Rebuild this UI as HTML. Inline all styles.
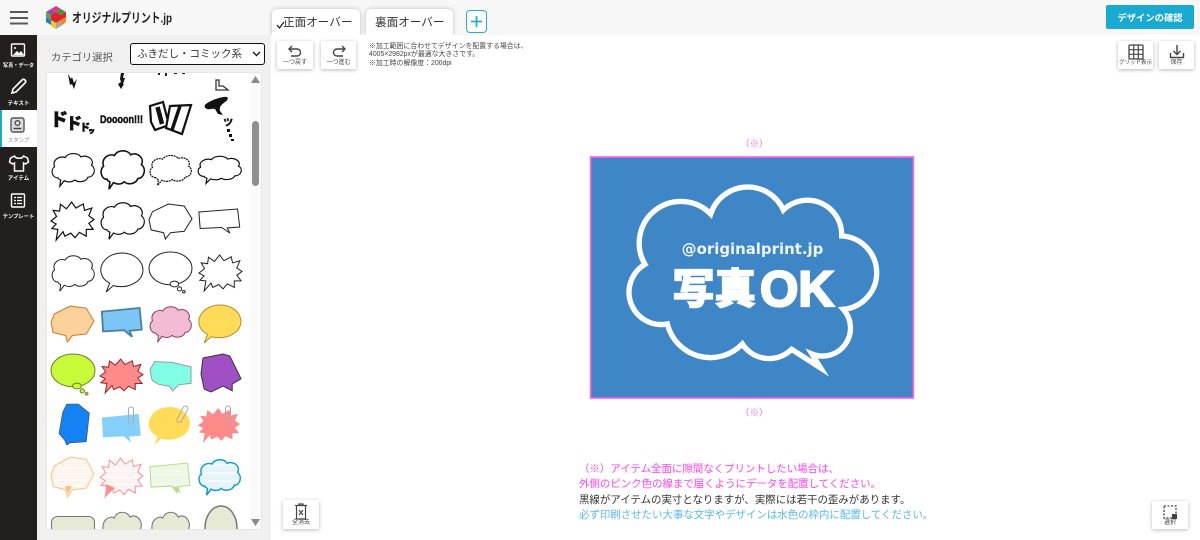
<!DOCTYPE html>
<html lang="ja"><head><meta charset="utf-8"><title>デザイン</title>
<style>
*{box-sizing:border-box}
html,body{margin:0;padding:0;width:1200px;height:540px;overflow:hidden;background:#fff;font-family:"Liberation Sans","Noto Sans CJK JP",sans-serif}
.a{position:absolute;white-space:nowrap}
.btn{position:absolute;background:#fff;box-shadow:0 1px 4px rgba(0,0,0,.28);text-align:center;color:#444;font-size:6px}
.btn span{position:absolute;left:0;right:0;bottom:2px;line-height:7px}
.btn svg{position:absolute;left:50%;top:3px;transform:translateX(-50%)}
.lab{position:absolute;left:0;width:37px;text-align:center;color:#fff;font-size:5.5px;line-height:8px;font-weight:bold;white-space:nowrap}
.tab{position:absolute;top:9px;height:26px;background:#fff;border-radius:5px 5px 0 0;box-shadow:0 0 4px rgba(0,0,0,.25);font-size:11.600px;line-height:28px;color:#333;white-space:nowrap}
</style></head><body>
<div class="a" style="left:0;top:0;width:1200px;height:35px;background:#f7f7f7"></div>
<div class="a" style="left:37px;top:35px;width:234px;height:505px;background:#f0f0f0"></div>
<div class="a" style="left:0;top:35px;width:37px;height:505px;background:#231f1e"></div>

<!-- hamburger -->
<svg class="a" style="left:10px;top:11px" width="18" height="14"><g fill="#58595b"><rect width="18" height="2"/><rect y="6" width="18" height="2"/><rect y="11.500" width="18" height="2"/></g></svg>
<!-- logo -->
<svg class="a" style="left:45px;top:6px" width="22" height="24" viewBox="0 0 22 24">
<polygon points="11,0 16,3 11,6 6,3" fill="#e8347c"/><polygon points="6,3 11,6 6,9 1,6" fill="#8c4fb0"/><polygon points="16,3 21,6 16,9 11,6" fill="#2f9e44"/>
<polygon points="1,6 6,9 6,14 1,11" fill="#5cab3c"/><polygon points="6,9 11,6 16,9 16,14 11,17 6,14" fill="#e5202a"/><polygon points="16,9 21,6 21,11 16,14" fill="#e5202a"/>
<polygon points="1,11 6,14 6,19 1,16" fill="#1583d8"/><polygon points="6,14 11,17 11,23 6,20" fill="#f8c51c"/><polygon points="11,17 16,14 16,20 11,23" fill="#a8a8a8"/><polygon points="16,14 21,11 21,16 16,20" fill="#f08a1d"/>
</svg>
<svg class="a" style="left:72px;top:8px" width="102" height="20"><text x="0" y="14.500" font-size="13" font-weight="bold" fill="#222" textLength="100" lengthAdjust="spacingAndGlyphs" font-family="Liberation Sans,Noto Sans CJK JP,sans-serif">オリジナルプリント.jp</text></svg>

<!-- sidebar -->
<svg class="a" style="left:0;top:35px" width="37" height="190" viewBox="0 0 37 190" fill="none">
<rect x="0" y="75" width="37" height="37" fill="#fff"/><rect x="0" y="75" width="2" height="37" fill="#1aa9d0"/>
<rect x="11.500" y="9" width="13" height="12" rx="1" stroke="#fff" stroke-width="1.400"/><circle cx="15" cy="13" r="1" fill="#fff"/><path d="M13 20l4-4 2 2 2-2 3 4z" fill="#fff"/>
<path d="M12 58l1-4 9-9c1-1 2-1 3 0s1 2 0 3l-9 9z" stroke="#fff" stroke-width="1.600"/>
<rect x="11" y="83" width="13" height="14" rx="2" stroke="#555" stroke-width="1.400" fill="#ddd"/><circle cx="17.500" cy="88" r="2.400" stroke="#444" stroke-width="1.300"/><path d="M13.500 93.500h8" stroke="#444" stroke-width="1.500"/>
<path d="M14 121l-4 2-1 4 3 2 2-1v8h9v-8l2 1 3-2-1-4-4-2c-1 3-8 3-9 0z" stroke="#fff" stroke-width="1.500" transform="translate(0.500,0)"/>
<rect x="11.500" y="159" width="13" height="13" rx="1" stroke="#fff" stroke-width="1.400"/><path d="M14 162.500h2M14 165.500h2M14 168.500h2M17 162.500h5M17 165.500h5M17 168.500h5" stroke="#fff" stroke-width="1.300"/>
</svg>
<div class="lab" style="top:62px;font-size:5.200px">写真・データ</div>
<div class="lab" style="top:100px">テキスト</div>
<div class="lab" style="top:137px;color:#888;font-weight:normal">スタンプ</div>
<div class="lab" style="top:175px">アイテム</div>
<div class="lab" style="top:213px;font-size:5.300px">テンプレート</div>

<!-- category -->
<div class="a" style="left:51px;top:51px;font-size:10.300px;line-height:16px;color:#555">カテゴリ選択</div>
<div class="a" style="left:130px;top:43px;width:135px;height:22px;background:#fff;border:1px solid #111;border-radius:3px;font-size:10.500px;line-height:20px;padding-left:6px;color:#333">ふきだし・コミック系
<svg style="position:absolute;right:3px;top:7px" width="9" height="6"><path d="M1 1l3.500 3.500L8 1" fill="none" stroke="#222" stroke-width="1.500"/></svg></div>

<!-- stamp list -->
<svg class="a" style="left:46px;top:72px" width="216" height="458" viewBox="46 72 216 458">
<defs>
<path id="cloud" vector-effect="non-scaling-stroke" d="M16 74C2 74-2 50 8 42C2 22 20 10 32 16C40 0 62 2 68 14C82 6 100 22 92 38C104 48 98 72 84 72C80 86 62 88 54 80C46 88 36 86 30 82L20 98L22 80C18 78 16 76 16 74Z"/>
<path id="oval" vector-effect="non-scaling-stroke" d="M30 84L14 100L22 78C0 66-4 40 10 22C28-4 72-4 90 22C104 42 98 66 78 78C62 88 44 88 30 84Z"/>
<g id="think"><ellipse vector-effect="non-scaling-stroke" cx="50" cy="40" rx="50" ry="40"/><ellipse vector-effect="non-scaling-stroke" cx="59" cy="78" rx="10" ry="7"/><circle vector-effect="non-scaling-stroke" cx="71" cy="90" r="5"/><circle vector-effect="non-scaling-stroke" cx="81" cy="97" r="3"/></g>
<polygon id="burst" vector-effect="non-scaling-stroke" points="0,50 13,38 5,22 20,24 22,6 36,18 48,0 58,16 75,5 78,22 95,16 88,36 100,46 88,56 98,72 82,72 82,90 66,80 56,94 46,82 32,90 28,78 12,100 16,72 2,70 12,58"/>
<polygon id="poly" vector-effect="non-scaling-stroke" points="0,45 8,22 45,0 82,6 100,42 82,78 50,82 38,100 34,82 5,74"/>
<polygon id="rect" vector-effect="non-scaling-stroke" points="2,12 92,0 97,72 68,76 74,96 55,74 5,78"/>
<pattern id="lo" width="6" height="3" patternUnits="userSpaceOnUse"><rect width="6" height="3" fill="#fff"/><rect width="6" height="1" fill="#ffe3cc"/></pattern>
<pattern id="lp" width="6" height="3" patternUnits="userSpaceOnUse"><rect width="6" height="3" fill="#fff"/><rect width="6" height="1" fill="#ffdfe1"/></pattern>
<pattern id="lg" width="6" height="3" patternUnits="userSpaceOnUse"><rect width="6" height="3" fill="#fff"/><rect width="6" height="1" fill="#cfe8b4"/></pattern>
<pattern id="lb" width="6" height="3" patternUnits="userSpaceOnUse"><rect width="6" height="3" fill="#fff"/><rect width="6" height="1" fill="#bfe2f2"/></pattern>
<clipPath id="cl"><rect x="47" y="73" width="203" height="456"/></clipPath>
</defs>
<rect x="46.500" y="72.500" width="215" height="457" fill="#fff" stroke="#e6e6e6"/>
<rect x="250" y="73" width="11" height="456" fill="#fafafa"/>
<rect x="252" y="121" width="7" height="65" rx="3.500" fill="#8f8f8f"/>
<polygon points="255.500,76 251,83 260,83" fill="#8a8a8a"/><polygon points="255.500,526 251,519 260,519" fill="#8a8a8a"/>
<g clip-path="url(#cl)">
<!-- row 1 -->
<path d="M68 74l3 5 1-2 2 6 3-4-3 10-2-5-2 1zM121 73l3 0-1 5 2 0-2 6 1 0-3 5-3-5 3-2-1-3z" fill="#111"/>
<path d="M158 73h2v2h-2zM165 73h2v3h-2zM174 73h3v1h-3zM182 73h3v1h-3z" fill="#222"/>
<path d="M216 80h3v6h4l5 4h-12z" fill="none" stroke="#333" stroke-width="1.300"/>
<!-- row 2 -->
<g font-weight="900" fill="#111" stroke="#111" stroke-width=".6" font-family="Noto Sans CJK JP,sans-serif">
<text x="50" y="126" font-size="18">ド</text><text x="66" y="129" font-size="16">ド</text><text x="80" y="131" font-size="10">ド</text><text x="88" y="133" font-size="7">ッ</text>
</g>
<text x="100" y="123" font-size="11" font-weight="bold" fill="#111" stroke="#111" stroke-width=".5" textLength="43" lengthAdjust="spacingAndGlyphs" font-family="Liberation Sans,sans-serif">Doooon!!!</text>
<polygon points="150,106 163,102 169,125 155,130 151,122" fill="#fff" stroke="#111" stroke-width="2.200"/>
<path d="M157.500 107l4.500 17" stroke="#111" stroke-width="4.500"/>
<polygon points="170,106 191,105 182,134 166,128" fill="#fff" stroke="#111" stroke-width="2.200"/>
<path d="M180 106l-8 24" stroke="#111" stroke-width="3.500"/>
<path d="M205 105c2-3 16-9 22-8 2 1 0 4-2 5-4 3-6 5-5 9l3 4-5-1-3-5c-3-1-6 1-8 0-2-1-3-2-2-4z" fill="#111"/>
<text x="222" y="125" font-size="12" font-weight="900" fill="#111" font-family="Noto Sans CJK JP,sans-serif">ッ</text>
<path d="M227 129h3v3h-3zM229 134h3v3h-3zM231 139h3v2h-3z" fill="#111"/>
<!-- row 3 -->
<g fill="#fff" stroke="#111" stroke-width="1.200">
<use href="#cloud" transform="translate(51,152) scale(.44,.35)"/>
<use href="#cloud" transform="translate(100,149) scale(.45,.41)" stroke-width="1.600"/>
<use href="#cloud" transform="translate(149,154) scale(.43,.32)" stroke-dasharray="2 .7"/>
<use href="#cloud" transform="translate(197,155) scale(.45,.29)"/>
<!-- row 4 -->
<use href="#burst" transform="translate(51,202) scale(.43,.38)"/>
<use href="#cloud" transform="translate(100,201) scale(.45,.39)"/>
</g>
<g fill="#fff" stroke="#222" stroke-width="1">
<use href="#poly" transform="translate(149,204) scale(.43,.35)"/>
<use href="#rect" transform="translate(198,209) scale(.43,.25)"/>
<!-- row 5 -->
<use href="#cloud" transform="translate(51,254) scale(.44,.38)"/>
<use href="#oval" transform="translate(100,252) scale(.44,.40)"/>
<use href="#think" transform="translate(149,252) scale(.43,.41)"/>
<use href="#burst" transform="translate(199,255) scale(.43,.36)"/>
</g>
<!-- row 6 -->
<use href="#poly" transform="translate(51,306) scale(.43,.36)" fill="#fdd19c" stroke="#c77a24"/>
<use href="#rect" transform="translate(101,308) scale(.42,.30)" fill="#7cc6f5" stroke="#4c7f9c" stroke-width="1.800"/>
<use href="#cloud" transform="translate(149,305) scale(.43,.38)" fill="#f2bcd4" stroke="#8d3d5f"/>
<use href="#oval" transform="translate(198,304) scale(.44,.39)" fill="#ffdb57" stroke="#b08f2c"/>
<!-- row 7 -->
<use href="#think" transform="translate(51,354) scale(.44,.41)" fill="#c8fb3a" stroke="#66802a"/>
<use href="#burst" transform="translate(100,359) scale(.43,.34)" fill="#ff8a8a" stroke="#9a2424"/>
<polygon points="0,30 12,5 55,8 100,22 100,75 70,80 55,100 48,85 20,78 5,65" transform="translate(150,360) scale(.41,.31)" fill="#80ffe6" stroke="#999" vector-effect="non-scaling-stroke"/>
<polygon points="5,10 55,0 72,5 100,62 78,75 78,92 55,80 25,95 8,88 0,50" transform="translate(201,354) scale(.40,.40)" fill="#a14fc4" stroke="#333" vector-effect="non-scaling-stroke"/>
<!-- row 8 -->
<polygon points="25,0 62,0 98,22 88,92 35,95 25,100 18,88 0,72 12,20" transform="translate(59,404) scale(.31,.41)" fill="#1482f2" stroke="#444" stroke-width=".6" vector-effect="non-scaling-stroke"/>
<use href="#rect" transform="translate(101,414) scale(.41,.30)" fill="#85d0fb"/>
<use href="#oval" transform="translate(148,406) scale(.43,.39)" fill="#ffdb57"/>
<use href="#burst" transform="translate(198,408) scale(.42,.35)" fill="#ff8a8a"/>
<g fill="none" stroke="#aaa" stroke-width="1"><rect x="128.500" y="407" width="5" height="17" rx="2.500"/><rect x="180" y="405" width="5" height="18" rx="2.500" transform="rotate(28 182 414)"/><rect x="225.500" y="406" width="5" height="16" rx="2.500"/></g>
<!-- row 9 -->
<use href="#poly" transform="translate(51,457) scale(.43,.40)" fill="url(#lo)" stroke="#ffbd80"/>
<use href="#burst" transform="translate(100,458) scale(.43,.39)" fill="url(#lp)" stroke="#ff9098"/>
<use href="#rect" transform="translate(149,463) scale(.42,.31)" fill="url(#lg)" stroke="#b4dc8a"/>
<use href="#cloud" transform="translate(198,458) scale(.43,.38)" fill="url(#lb)" stroke="#149ccb" stroke-width="1.500"/>
<polygon points="65,486 72,486 68,494" fill="#ffbd80"/><polygon points="106,484 115,488 106,496" fill="#ff8f8f"/><polygon points="172,487 179,487 177,494" fill="#b4dc8a"/>
<!-- row 10 -->
<g fill="#e6e9d4" stroke="#777" stroke-width="1.100">
<rect x="51.500" y="516.500" width="43" height="30" rx="6"/>
<use href="#cloud" transform="translate(100,510) scale(.44,.50)"/>
<use href="#cloud" transform="translate(149,510) scale(.43,.50)"/>
<ellipse cx="221" cy="528" rx="16" ry="22" stroke-width="1.500"/>
</g>
</g>
</svg>

<!-- tabs -->
<div class="a" style="left:271px;top:35px;width:929px;height:505px;background:#fff"></div>
<div class="tab" style="left:272px;width:88px;padding-left:11px">正面オーバー
<svg style="position:absolute;left:4px;top:12px" width="9" height="8"><path d="M1 4l2.500 3L8 1" fill="none" stroke="#222" stroke-width="1.300"/></svg></div>
<div class="tab" style="left:366px;width:87px;padding-left:9px">裏面オーバー</div>
<div class="a" style="left:271px;top:35px;width:200px;height:6px;background:#fff"></div>
<div class="a" style="left:466px;top:10px;width:21px;height:23px;background:#fff;border:1px solid #26aed4;border-radius:4px">
<svg style="position:absolute;left:3px;top:4px" width="13" height="13"><path d="M6.500 1v11M1 6.500h11" stroke="#26aed4" stroke-width="1.800"/></svg></div>

<!-- confirm -->
<div class="a" style="left:1106px;top:5px;width:88px;height:24px;background:#1aa9d0;border-radius:2px;color:#fff;font-size:9.300px;font-weight:bold;line-height:26px;text-align:center">デザインの確認</div>

<!-- top buttons -->
<div class="btn" style="left:277px;top:41px;width:36px;height:28px"><svg width="16" height="16" viewBox="0 0 16 16" fill="none"><path d="M5 2L2 5l3 3M2 5h8a3.500 3.500 0 010 7H4" stroke="#444" stroke-width="1.400"/></svg><span>一つ戻す</span></div>
<div class="btn" style="left:321px;top:41px;width:35px;height:28px"><svg width="16" height="16" viewBox="0 0 16 16" fill="none"><path d="M11 2l3 3-3 3M14 5H6a3.500 3.500 0 000 7h6" stroke="#444" stroke-width="1.400"/></svg><span>一つ進む</span></div>
<div class="a" style="left:369px;top:43px;font-size:6.900px;line-height:8.300px;color:#444">※加工範囲に合わせてデザインを配置する場合は、<br>4005×2982pxが最適な大きさです。<br>※加工時の解像度：200dpi</div>
<div class="btn" style="left:1118px;top:41px;width:35px;height:28px"><svg width="16" height="16" viewBox="0 0 16 16" fill="none"><rect x="1" y="1" width="14" height="14" rx="1" stroke="#444" stroke-width="1.300"/><path d="M5.700 1v14M10.300 1v14M1 5.700h14M1 10.300h14" stroke="#444" stroke-width="1.200"/></svg><span style="font-size:5.500px">グリッド表示</span></div>
<div class="btn" style="left:1159px;top:41px;width:35px;height:28px"><svg width="17" height="16" viewBox="0 0 17 16" fill="none"><path d="M8.500 1v9M5 7l3.500 3.500L12 7M2 9v4.500h13V9" stroke="#444" stroke-width="1.400"/></svg><span>保存</span></div>

<!-- canvas -->
<div class="a" style="left:740px;top:139px;font-size:9.500px;line-height:12px;color:#ff66ee">（※）</div>
<div class="a" style="left:740px;top:408px;font-size:9.500px;line-height:12px;color:#ff66ee">（※）</div>
<svg class="a" style="left:580px;top:130px" width="340" height="290" viewBox="0 0 1020 870">
<rect x="32" y="81" width="968" height="723" fill="#3f86c7" stroke="#ff5cf4" stroke-width="5"/>
<path d="M392 252A117 117 0 0 1 610 240A103 103 0 0 1 785 318A110.300 110.300 0 0 1 790 538A84 84 0 0 1 696 672L722 714L635 658A96 96 0 0 1 487 642A133 133 0 0 1 262 582A97 97 0 0 1 195 403A125 125 0 0 1 392 252Z" fill="none" stroke="#fff" stroke-width="16" stroke-linejoin="miter" stroke-miterlimit="8"/>
<text x="305" y="372" font-size="44" font-weight="bold" fill="#eef5fb" textLength="425" lengthAdjust="spacingAndGlyphs" font-family="DejaVu Sans,sans-serif">@originalprint.jp</text>
<text x="278" y="520" font-size="124" font-weight="900" fill="#fff" stroke="#fff" stroke-width="4" textLength="250" lengthAdjust="spacingAndGlyphs" font-family="Noto Sans CJK JP,sans-serif">写真</text>
<text x="540" y="528" font-size="150" font-weight="bold" fill="#fff" stroke="#fff" stroke-width="7" textLength="222" lengthAdjust="spacingAndGlyphs" font-family="Liberation Sans,sans-serif">OK</text>
</svg>

<!-- notes -->
<div class="a" style="left:579px;top:462px;font-size:10.450px;line-height:15.300px">
<span style="color:#ff44ee">（※）アイテム全面に隙間なくプリントしたい場合は、</span><br>
<span style="color:#ff44ee">外側のピンク色の線まで届くようにデータを配置してください。</span><br>
<span style="color:#333">黒線がアイテムの実寸となりますが、実際には若干の歪みがあります。</span><br>
<span style="color:#55b8ee">必ず印刷させたい大事な文字やデザインは水色の枠内に配置してください。</span></div>

<!-- bottom buttons -->
<div class="btn" style="left:283px;top:500px;width:36px;height:29px"><svg width="14" height="17" viewBox="0 0 14 17" fill="none"><path d="M2.500 3v13h9V3M1 2.500h12M5 2.500V1h4v1.500M5 7l4 5M9 7l-4 5" stroke="#444" stroke-width="1.200"/></svg><span>全消去</span></div>
<div class="btn" style="left:1152px;top:501px;width:36px;height:28px"><svg width="16" height="16" viewBox="0 0 16 16" fill="none"><rect x="2" y="2" width="12" height="12" stroke="#444" stroke-width="1.300" stroke-dasharray="2 1.500"/><path d="M10 10h5v5h-5z" fill="#444"/></svg><span>選択</span></div>
</body></html>
